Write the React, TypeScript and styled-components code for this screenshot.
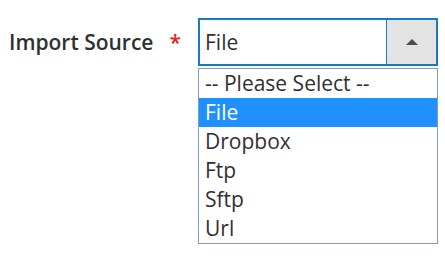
import React from 'react'
import styled, { createGlobalStyle } from 'styled-components'

const GlobalStyle = createGlobalStyle`
  body {
    margin: 0;
    background: #ffffff;
    font-family: 'Open Sans', 'DejaVu Sans', sans-serif;
  }
`

const Field = styled.div`
  display: flex;
  align-items: flex-start;
  padding: 18px 0 0 9px;
`

const Label = styled.label`
  display: flex;
  align-items: center;
  height: 48px;
  width: 189px;
  font-size: 21px;
  font-weight: 600;
  color: #303030;
`

const Required = styled.span`
  color: #e22626;
  margin-left: 16px;
  font-size: 21px;
`

const Control = styled.div`
  position: relative;
  width: 240px;
`

const SelectBox = styled.div`
  display: flex;
  height: 48px;
  box-sizing: border-box;
  border: 2px solid #1979c3;
  background: #fff;
`

const Value = styled.div`
  flex: 1;
  display: flex;
  align-items: center;
  padding-left: 5px;
  font-size: 21px;
  color: #303030;
  border-right: 1px solid #1979c3;
`

const ArrowButton = styled.div`
  width: 49px;
  display: flex;
  align-items: center;
  justify-content: center;
  background: #e3e3e3;
`

const Arrow = styled.span`
  width: 0;
  height: 0;
  border-left: 6px solid transparent;
  border-right: 6px solid transparent;
  border-bottom: 6px solid #514943;
`

const List = styled.ul`
  list-style: none;
  margin: 2px 0 0;
  padding: 0;
  border: 1px solid #7f9db9;
  background: #fff;
`

const Option = styled.li<{ selected?: boolean }>`
  height: 29px;
  line-height: 29px;
  padding-left: 6px;
  font-size: 21px;
  color: ${({ selected }) => (selected ? '#ffffff' : '#303030')};
  background: ${({ selected }) => (selected ? '#1e90ff' : 'transparent')};
`

const options = ['-- Please Select --', 'File', 'Dropbox', 'Ftp', 'Sftp', 'Url']

export default function App() {
  const selected = 'File'
  return (
    <>
      <GlobalStyle />
      <Field>
        <Label>
          Import Source
          <Required>*</Required>
        </Label>
        <Control>
          <SelectBox>
            <Value>{selected}</Value>
            <ArrowButton>
              <Arrow />
            </ArrowButton>
          </SelectBox>
          <List>
            {options.map((o) => (
              <Option key={o} selected={o === selected}>
                {o}
              </Option>
            ))}
          </List>
        </Control>
      </Field>
    </>
  )
}
